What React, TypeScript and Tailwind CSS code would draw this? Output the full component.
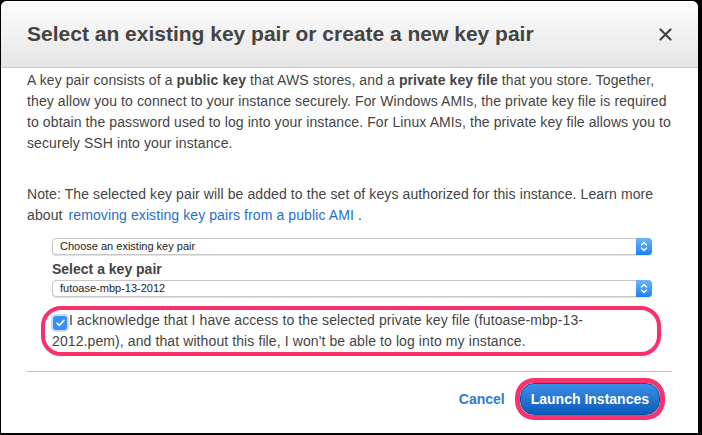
const SelectBox = ({ value }: { value: string }) => {
  return (
    <div className="flex h-[17px] items-stretch rounded-[4px] border border-[#c6c6c6] bg-white shadow-[0_1px_1px_rgba(0,0,0,0.12)]">
      <div className="flex flex-1 items-center pl-[7px] text-[11px] text-[#222]">{value}</div>
      <div className="-my-px -mr-px flex w-[16px] items-center justify-center rounded-r-[4px] bg-gradient-to-b from-[#6db4fb] to-[#1c7ff6]">
        <svg width="8" height="11" viewBox="0 0 8 11" fill="none" stroke="white" strokeWidth="1.4" strokeLinecap="round" strokeLinejoin="round">
          <path d="M1.5 4 L4 1.5 L6.5 4" />
          <path d="M1.5 7 L4 9.5 L6.5 7" />
        </svg>
      </div>
    </div>
  );
};

const KeyPairDialog = () => {
  return (
    <div className="h-[435px] w-[702px] bg-black pl-px pt-px" style={{ fontFamily: '"Liberation Sans", Arial, sans-serif' }}>
      <div className="flex h-[432px] w-[697px] flex-col overflow-hidden rounded-t-[6px] bg-white text-[#444]">
        <div className="flex h-[67px] items-center justify-between border-b border-[#c9c9c9] bg-gradient-to-b from-[#fdfdfd] to-[#e6e6e6] px-[26px]">
          <h1 className="text-[21px] font-bold text-[#444]">Select an existing key pair or create a new key pair</h1>
          <svg width="13" height="13" viewBox="0 0 13 13" stroke="#444" strokeWidth="2.2" strokeLinecap="round">
            <path d="M1.5 1.5 L11.5 11.5 M11.5 1.5 L1.5 11.5" />
          </svg>
        </div>

        <div className="px-[26px] pt-[2px] text-[14px] leading-[21px] tracking-[0.1px]">
          <p>
            A key pair consists of a <b>public key</b> that AWS stores, and a <b>private key file</b> that you store. Together,
            <br />
            they allow you to connect to your instance securely. For Windows AMIs, the private key file is required
            <br />
            to obtain the password used to log into your instance. For Linux AMIs, the private key file allows you to
            <br />
            securely SSH into your instance.
          </p>
          <p className="mt-[30px]">
            Note: The selected key pair will be added to the set of keys authorized for this instance. Learn more
            <br />
            about <span className="ml-[2px] text-[#1f6fc5]">removing existing key pairs from a public AMI</span> .
          </p>

          <div className="ml-[25px] w-[600px] tracking-normal">
            <div className="mt-[12px]">
              <SelectBox value="Choose an existing key pair" />
            </div>
            <div className="mt-[4px] font-bold leading-[20px]">Select a key pair</div>
            <div className="mt-px">
              <SelectBox value="futoase-mbp-13-2012" />
            </div>

            <div className="-ml-[11px] mt-[9px] w-[620px] rounded-[20px] border-4 border-[#fb2f6c] pl-[7px] tracking-[0.1px]">
              <p>
                <span className="mr-[2px] ml-px inline-flex h-[14px] w-[14px] items-center justify-center rounded-[3px] bg-[#3a8ef5] align-[-2px] shadow-[0_0_0_2px_rgba(90,155,240,0.35)]">
                  <svg width="9" height="8" viewBox="0 0 9 8" fill="none" stroke="white" strokeWidth="1.6" strokeLinecap="round" strokeLinejoin="round">
                    <path d="M1 4.2 L3.4 6.5 L8 1.2" />
                  </svg>
                </span>
                I acknowledge that I have access to the selected private key file (futoase-mbp-13-
                <br />
                2012.pem), and that without this file, I won't be able to log into my instance.
              </p>
            </div>
          </div>

          <div className="mt-[15px] border-t border-[#c2c2c2]" />

          <div className="mt-[11px] flex items-center justify-end pr-[12px] tracking-normal">
            <span className="mr-[15px] font-bold text-[#2d7bd4]">Cancel</span>
            <button className="h-[32px] rounded-[14px] border border-[#0b529f] bg-gradient-to-b from-[#3b90e8] to-[#0a5bbb] px-[10px] font-bold text-white ring-[5px] ring-[#f8336f]">
              Launch Instances
            </button>
          </div>
        </div>
      </div>
    </div>
  );
};

export default function App() {
  return <KeyPairDialog />;
}
